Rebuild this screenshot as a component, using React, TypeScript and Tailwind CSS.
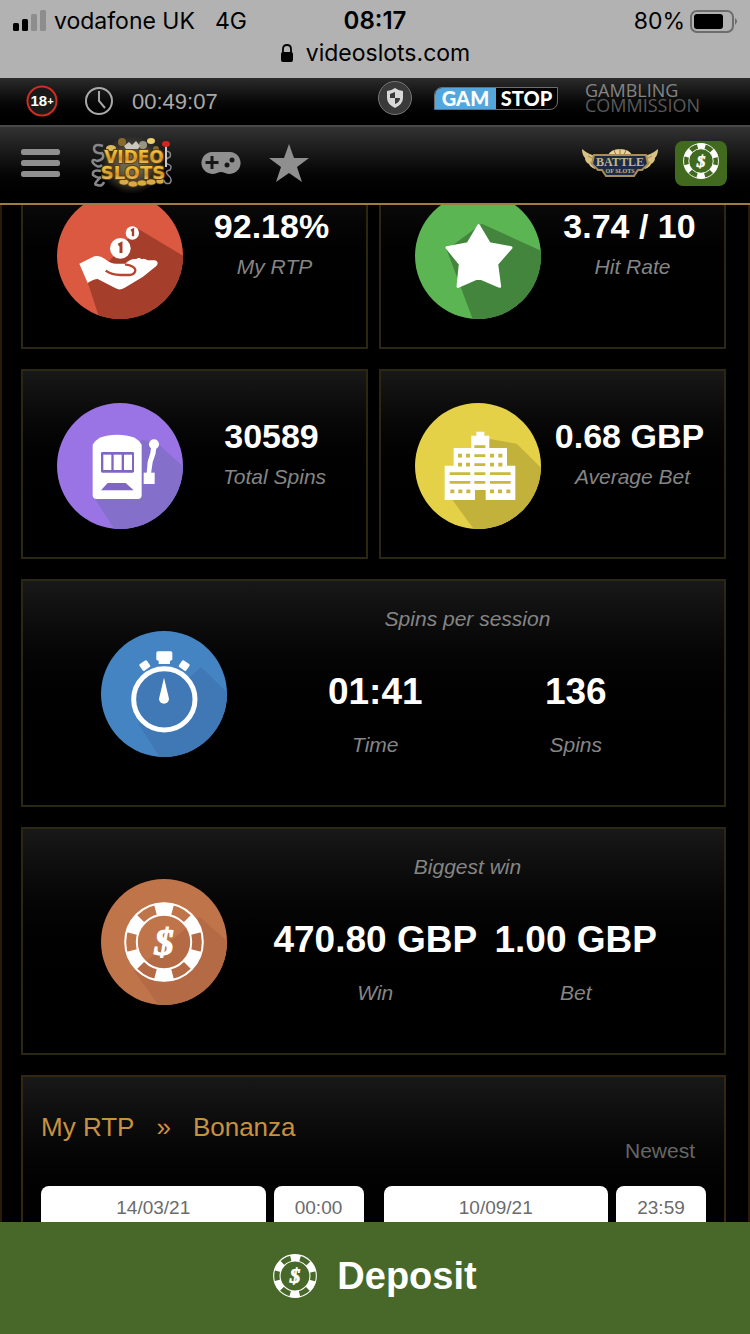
import React from 'react';

const Chip = ({ className }: { className?: string }) => (
    <svg viewBox="0 0 100 100" className={className} fill="none" stroke="currentColor" aria-hidden="true">
        <circle cx="50" cy="50" r="48.5" strokeWidth="2.5" />
        <circle cx="50" cy="50" r="34" strokeWidth="2.5" />
        <circle cx="50" cy="50" r="41.5" strokeWidth="15" pathLength={12} strokeDasharray="1 1" strokeDashoffset="-0.5" />
        <text x="50" y="66" textAnchor="middle" fill="currentColor" strokeWidth="1.5" className="font-['Liberation_Serif',serif] text-[48px] font-bold italic">$</text>
    </svg>
);

const RtpIcon = () => (
    <svg viewBox="0 0 378 378" className="size-[126px] shrink-0 rounded-full bg-[#db5940]" aria-hidden="true">
        <path d="M238 104 L378 188 V378 H128 L92 268 L180 180Z" fill="#a63e2c" />
        <g fill="#fff">
            <path d="M67 212 L112 190 Q128 186 143 197 Q160 212 178 212 H204 Q220 196 238 198 Q246 192 254 199 Q262 194 272 202 H294 Q308 208 298 219 L258 251 L202 285 Q188 293 176 286 L122 258 Q110 258 92 270Z" />
            <circle cx="190" cy="166" r="31" />
            <circle cx="226" cy="120" r="20" />
        </g>
        <path d="M146 233 Q164 246 190 246 H218 Q235 244 235 231 Q234 219 204 214" fill="none" stroke="#b8452f" strokeWidth="7" />
        <g fill="none" stroke="#a63e2c">
            <path d="M184 156 L192 152 V180" strokeWidth="9" />
            <path d="M222 113 L228 110 V130" strokeWidth="7" />
        </g>
    </svg>
);

const HitIcon = () => (
    <svg viewBox="0 0 378 378" className="size-[126px] shrink-0 rounded-full bg-[#5ab552]" aria-hidden="true">
        <path d="M200 92 L378 173 V378 H173 L95 170Z" fill="#43853c" />
        <path d="M191 98 L223 152 L288 164 L245 213 L254 280 L191 253 L129 280 L136 213 L96 164 L159 152Z" fill="#fff" stroke="#fff" strokeWidth="9" strokeLinejoin="round" />
    </svg>
);

const SpinsIcon = () => (
    <svg viewBox="0 0 378 378" className="size-[126px] shrink-0 rounded-full bg-[#9a74e4]" aria-hidden="true">
        <path d="M300 120 L378 190 V378 H172 L110 282 L254 110Z" fill="#8470cb" />
        <g fill="#fff">
            <path d="M107 125 Q122 95 180 95 Q240 95 254 125 V276 Q254 288 242 288 H119 Q107 288 107 276Z" />
            <circle cx="291" cy="124" r="15" />
            <path d="M283 128 L299 128 Q298 152 287 178 L282 212 H269 L272 176 Q282 150 283 128Z" />
            <rect x="260" y="209" width="33" height="34" />
        </g>
        <rect x="132" y="147" width="99" height="62" rx="4" fill="#8066c4" />
        <g fill="#fff">
            <rect x="139" y="155" width="24" height="46" />
            <rect x="170" y="155" width="24" height="46" />
            <rect x="201" y="155" width="24" height="46" />
        </g>
        <path d="M152 240 H206 L230 262 H132Z" fill="#8066c4" />
    </svg>
);

const BetIcon = () => (
    <svg viewBox="0 0 378 378" className="size-[126px] shrink-0 rounded-full bg-[#e4d148]" aria-hidden="true">
        <path d="M224 108 L305 122 L378 194 V378 H176 L110 288Z" fill="#c2b23c" />
        <path d="M184 86 H208 V98 H223 V135 H276 V188 H301 V291 H212 V261 H180 V291 H89 V188 H116 V135 H169 V98 H184Z" fill="#fff" />
        <g stroke="#c9b93f" strokeWidth="11" fill="none">
            <path d="M178 131 H211 M178 158 H211 M178 185 H211 M178 212 H211 M178 238 H211" strokeWidth="8" />
            <path d="M129 158 H141 M153 158 H165 M225 158 H237 M250 158 H262" />
            <path d="M129 185 H141 M153 185 H165 M225 185 H237 M250 185 H262" />
            <path d="M104 212 H166 M225 212 H287 M104 238 H166 M225 238 H287" strokeWidth="8" />
            <path d="M106 265 H118 M130 265 H142 M154 265 H166 M225 265 H237 M249 265 H261 M274 265 H286" />
        </g>
    </svg>
);

const TimeIcon = () => (
    <svg viewBox="0 0 378 378" className="size-[126px] shrink-0 rounded-full bg-[#4584c3]" aria-hidden="true">
        <path d="M300 108 L378 184 V378 H176 L112 278Z" fill="#3f78b4" />
        <circle cx="190" cy="205" r="92" fill="#4079b6" stroke="#fff" strokeWidth="15" />
        <g fill="#fff">
            <path d="M166 66 Q166 61 171 61 H209 Q214 61 214 66 V86 L207 90 V99 H173 V90 L166 86Z" />
            <rect x="118" y="92" width="27" height="24" rx="4" transform="rotate(-35 131 104)" />
            <rect x="236" y="92" width="27" height="24" rx="4" transform="rotate(35 250 104)" />
            <path d="M189 140 L204 203 A15 15 0 1 1 174 203Z" />
        </g>
    </svg>
);

const WinIcon = () => (
    <div className="relative size-[126px] shrink-0">
        <svg viewBox="0 0 378 378" className="size-[126px] rounded-full bg-[#c0744a]" aria-hidden="true">
            <path d="M296 114 L378 186 V378 H172 L100 276Z" fill="#b36a45" />
        </svg>
        <Chip className="absolute inset-0 m-auto size-20 text-white" />
    </div>
);

const SiteLogo = () => (
    <svg viewBox="0 0 84 60" className="h-[60px] w-[84px]" aria-label="Video Slots" role="img">
        <defs>
            <linearGradient id="gold" x1="0" y1="0" x2="0" y2="1">
                <stop offset="0.2" stopColor="#f2c53e" />
                <stop offset="0.6" stopColor="#cf9426" />
                <stop offset="1" stopColor="#fbeaa8" />
            </linearGradient>
            <radialGradient id="glow">
                <stop offset="0.3" stopColor="#6b6552" />
                <stop offset="1" stopColor="#6b6552" stopOpacity="0" />
            </radialGradient>
        </defs>
        <ellipse cx="42" cy="32" rx="32" ry="29" fill="url(#glow)" />
        <g fill="none" stroke="#85878a" strokeWidth="2.5">
            <path d="M13 13 Q4 10 4 16 Q5 21 12 20 Q16 26 7 28 Q1 25 3 30 Q8 36 12 32 M11 38 Q2 36 3 42 Q8 46 11 44 Q2 52 7 52 Q12 54 14 49" />
            <path d="M75 18 Q82 18 80 24 Q74 26 77 31 Q83 32 80 37 Q74 38 78 42 Q83 46 80 50 Q75 52 74 47" strokeWidth="1.5" />
        </g>
        <g fill="#8a6a2c">
            <circle cx="32" cy="9" r="4" />
            <circle cx="53" cy="12" r="4" fill="#9a9484" />
            <circle cx="66" cy="16" r="3" />
            <ellipse cx="21" cy="15" rx="5" ry="3" fill="#dcb95a" />
            <ellipse cx="61" cy="8" rx="4" ry="3" fill="#ecd070" />
        </g>
        <path d="M34 13 L39 9 L42 12 L46 8 L50 13 L48 16 H36Z" fill="#c9c7c0" />
        <path d="M76 13 V34" stroke="#c8c8c8" strokeWidth="2" />
        <ellipse cx="76" cy="11" rx="4" ry="3" fill="#d5241b" />
        <g fill="#d9ab45" stroke="#6b4710" strokeWidth="0.6">
            <ellipse cx="34" cy="49" rx="5" ry="3" />
            <ellipse cx="43" cy="51" rx="5" ry="3" />
            <ellipse cx="52" cy="50" rx="5" ry="3" />
            <ellipse cx="61" cy="49" rx="5" ry="3" />
            <ellipse cx="70" cy="48" rx="4" ry="3" />
        </g>
        <g fill="url(#gold)" stroke="#5e3d0c" strokeWidth="2" strokeLinejoin="round" paintOrder="stroke" className="font-['DejaVu_Sans',sans-serif] font-bold">
            <text x="44" y="30" textAnchor="middle" className="text-[17px]">VIDEO</text>
            <text x="43" y="46" textAnchor="middle" className="text-[18px]">SLOTS</text>
        </g>
    </svg>
);

const BattleLogo = () => (
    <svg viewBox="0 0 78 30" className="h-[30px] w-[78px]" aria-label="Battle of Slots" role="img">
        <path d="M27 7 Q30 1 39 1 Q48 1 51 7Z" fill="#e6d29a" />
        <path d="M33 2 L35 7 M39 1 V7 M45 2 L43 7" stroke="#8d7437" />
        <path d="M1 1 Q8 7 16 8 L14 21 Q9 19 8 16 Q4 14 4 10 Q1 7 1 1Z M77 1 Q70 7 62 8 L64 21 Q69 19 70 16 Q74 14 74 10 Q77 7 77 1Z" fill="#d9c184" />
        <path d="M7 8 L15 12 M9 14 L14 17 M71 8 L63 12 M69 14 L64 17" stroke="#8d7437" strokeWidth="0.7" />
        <path d="M13 7 H65 L67 16 L61 22 H57 L53 28 H25 L21 22 H17 L11 16Z" fill="#1c2b45" stroke="#a98d58" strokeWidth="2" />
        <g fill="#c4b588" textAnchor="middle" className="font-['Liberation_Serif',serif] font-bold">
            <text x="39" y="18" className="text-[12px]">BATTLE</text>
            <text x="39" y="25" className="text-[6px]">OF SLOTS</text>
        </g>
    </svg>
);

const Stat = ({ icon, value, label }: { icon: React.ReactNode; value: string; label: string }) => (
    <section className="flex h-[190px] items-start border-2 border-[#2c2710] bg-linear-to-b from-[#181818] to-black to-75% pt-8 pr-1.5 pl-[34px]">
        {icon}
        <div className="mt-3 flex-1 text-center whitespace-nowrap">
            <p className="text-[34px] leading-[42px] font-bold text-white">{value}</p>
            <p className="mt-2 pl-1.5 text-[21px] leading-6 text-[#858585] italic">{label}</p>
        </div>
    </section>
);

const WideStat = ({ icon, title, items }: { icon: React.ReactNode; title: string; items: string[][] }) => (
    <section className="col-span-2 flex h-[228px] items-start border-2 border-[#2c2710] bg-linear-to-b from-[#181818] to-black to-75% pr-4 pl-[78px]">
        <div className="pt-[50px]">{icon}</div>
        <div className="flex-1 pt-[26px] text-center text-[21px] leading-6 text-[#858585] italic">
            <h2>{title}</h2>
            <div className="mt-[38px] flex pr-8 pl-12">
                {items.map(([value, label]) => (
                    <div key={label} className="flex min-w-0 flex-1 flex-col items-center whitespace-nowrap">
                        <p className="text-[37px] leading-[46px] font-bold text-white not-italic">{value}</p>
                        <p className="mt-[18px]">{label}</p>
                    </div>
                ))}
            </div>
        </div>
    </section>
);

const inputClass = 'h-11 min-w-0 rounded-lg bg-white text-center text-[19px] text-[#6b6b6b]';

const DateRow = ({ name, date, time }: { name: string; date: string; time: string }) => (
    <div className="flex min-w-0 flex-1 gap-2">
        <input type="text" aria-label={`${name} date`} defaultValue={date} className={`${inputClass} flex-1`} />
        <input type="text" aria-label={`${name} time`} defaultValue={time} className={`${inputClass} w-[90px]`} />
    </div>
);

const App = () => {
    return (
        <div className="flex h-dvh flex-col overflow-hidden bg-black font-['Liberation_Sans',Arial,sans-serif]">
            <div className="h-[78px] shrink-0 bg-[#b2b2b2] px-3 pt-[5px] font-['Inter',sans-serif] text-[23px] leading-8 text-black">
                <div className="grid grid-cols-[1fr_auto_1fr] items-center">
                    <div className="flex items-center whitespace-nowrap">
                        <svg viewBox="0 0 34 22" className="mr-2 h-[22px] w-[34px]" aria-hidden="true">
                            <rect x="1" y="13" width="6" height="8" rx="1.5" />
                            <rect x="10" y="9" width="6" height="12" rx="1.5" />
                            <rect x="19" y="4" width="6" height="17" rx="1.5" fill="#8d8d8d" />
                            <rect x="28" y="0" width="6" height="21" rx="1.5" fill="#8d8d8d" />
                        </svg>
                        <span>vodafone UK</span>
                        <span className="ml-5">4G</span>
                    </div>
                    <span className="text-[24px] font-semibold">08:17</span>
                    <div className="flex items-center justify-end gap-1">
                        <span>80%</span>
                        <svg viewBox="0 0 49 24" className="h-6 w-[49px]" aria-hidden="true">
                            <rect x="2" y="2" width="42" height="21" rx="6" fill="none" stroke="#6d6d6d" strokeWidth="2" />
                            <rect x="5" y="5" width="29" height="15" rx="3" />
                            <path d="M46 9 Q50 12 46 16Z" fill="#6d6d6d" />
                        </svg>
                    </div>
                </div>
                <div className="flex items-center justify-center gap-3">
                    <svg viewBox="0 0 14 20" className="h-5 w-3.5" aria-hidden="true">
                        <path d="M3 10 V6 Q3 2 7 2 Q11 2 11 6 V10" fill="none" stroke="#000" strokeWidth="1.8" />
                        <rect x="1" y="9" width="12" height="10" rx="2" />
                    </svg>
                    <span>videoslots.com</span>
                </div>
            </div>

            <div className="flex h-[47px] shrink-0 items-center border-b border-black bg-linear-to-b from-[#2b2b2b] to-black pr-[45px] pl-[26px]">
                <svg viewBox="0 0 32 32" className="size-8" aria-label="18+" role="img">
                    <circle cx="16" cy="16" r="14.5" fill="#1a1a1a" stroke="#cf2d20" strokeWidth="2" />
                    <text x="16" y="21" textAnchor="middle" fill="#fff" className="text-[15px] font-bold">18<tspan className="text-[11px]" dy="-1">+</tspan></text>
                </svg>
                <svg viewBox="0 0 30 30" className="ml-[26px] size-[30px]" fill="none" stroke="#a9a9a9" strokeWidth="2" aria-hidden="true">
                    <circle cx="15" cy="15" r="13" />
                    <path d="M15 5 V15 L21 22" />
                </svg>
                <span className="ml-[18px] text-[22px] text-[#a9a9a9]">00:49:07</span>
                <div className="ml-auto flex items-center pb-1.5">
                    <a href="#" aria-label="Account protection">
                        <svg viewBox="0 0 36 36" className="size-9" aria-hidden="true">
                            <circle cx="18" cy="18" r="16.5" fill="#3a3a3a" stroke="#777" />
                            <path d="M18 8 Q22 11 26 11 V18 Q26 24 18 28 Q10 24 10 18 V11 Q14 11 18 8Z" fill="#d8d8d8" />
                            <path d="M18 12 V18 H13 V14Z M18 18 H23 Q23 22 18 24Z" fill="#3a3a3a" />
                        </svg>
                    </a>
                    <a href="#" className="ml-[21px] flex h-[23px] w-[124px] items-center overflow-hidden rounded-tl-lg rounded-br-lg border border-[#6d6d6d] bg-black text-center font-['Lato',sans-serif] text-[20px] leading-[21px] font-black text-white">
                        <span className="flex-1 bg-[#53a7dd]">GAM</span>
                        <span className="flex-1">STOP</span>
                    </a>
                    <a href="#" className="ml-[27px] w-[120px] font-['Open_Sans',sans-serif] text-[18px] leading-[15px] text-[#5a5a5a]">
                        <span className="block text-[#858585]">GAMBLING</span>
                        <span className="block">COMMISSION</span>
                    </a>
                </div>
            </div>

            <header className="flex h-20 shrink-0 items-center border-t-2 border-b-2 border-t-[#484848] border-b-[#a07c40] bg-linear-to-b from-[#333] to-black pr-[23px] pb-1 pl-5">
                <button type="button" aria-label="Menu">
                    <svg viewBox="0 0 42 30" className="h-[30px] w-[42px]" fill="#8f8f8f" aria-hidden="true">
                        <rect x="1" y="1" width="39" height="6" rx="2.5" />
                        <rect x="1" y="12" width="39" height="6" rx="2.5" />
                        <rect x="1" y="23" width="39" height="6" rx="2.5" />
                    </svg>
                </button>
                <a href="#" className="ml-7">
                    <SiteLogo />
                </a>
                <a href="#" aria-label="Games" className="ml-[27px]">
                    <svg viewBox="0 0 40 22" className="h-[22px] w-10" aria-hidden="true">
                        <path d="M11 0 H29 A11 11 0 1 1 24 21 Q20 19 16 21 A11 11 0 1 1 11 0Z" fill="#8f8f8f" />
                        <path d="M11 4 V17 M4.5 10.5 H17.5" stroke="#171717" strokeWidth="3" />
                        <circle cx="31" cy="8" r="2.5" fill="#171717" />
                        <circle cx="26" cy="13" r="2.5" fill="#171717" />
                    </svg>
                </a>
                <a href="#" aria-label="Favourites" className="ml-7">
                    <svg viewBox="0 0 40 38" className="h-[38px] w-10" fill="#8f8f8f" aria-hidden="true">
                        <path d="M20 0 L25 14 H40 L28 23 L33 38 L20 29 L7 38 L12 23 L0 14 H15Z" />
                    </svg>
                </a>
                <a href="#" className="ml-auto">
                    <BattleLogo />
                </a>
                <button type="button" aria-label="Cashier" className="ml-4 flex h-[45px] w-[52px] items-center justify-center rounded-lg bg-[#426a1f] pb-1 text-white">
                    <Chip className="size-9" />
                </button>
            </header>

            <main className="min-h-0 flex-1 overflow-hidden border-x-2 border-[#2a1c06] pr-[22px] pl-[19px]">
                <div className="-mt-[46px] grid grid-cols-2 gap-x-[11px] gap-y-5">
                    <Stat icon={<RtpIcon />} value="92.18%" label="My RTP" />
                    <Stat icon={<HitIcon />} value="3.74 / 10" label="Hit Rate" />
                    <Stat icon={<SpinsIcon />} value="30589" label="Total Spins" />
                    <Stat icon={<BetIcon />} value="0.68 GBP" label="Average Bet" />
                    <WideStat icon={<TimeIcon />} title="Spins per session" items={[['01:41', 'Time'], ['136', 'Spins']]} />
                    <WideStat icon={<WinIcon />} title="Biggest win" items={[['470.80 GBP', 'Win'], ['1.00 GBP', 'Bet']]} />

                    <section className="col-span-2 border-2 border-[#35270f] bg-linear-to-b from-[#181818] to-black px-[18px] pt-[34px] pb-5">
                        <div className="flex items-start justify-between">
                            <nav className="flex gap-[22px] text-[26px] leading-8 text-[#c8913f]">
                                <a href="#">My RTP</a>
                                <span>»</span>
                                <a href="#">Bonanza</a>
                            </nav>
                            <select aria-label="Sort order" className="mt-7 mr-2.5 h-6 appearance-none text-[21px] leading-6 text-[#666]">
                                <option>Newest</option>
                            </select>
                        </div>
                        <div className="mt-[23px] flex gap-5">
                            <DateRow name="From" date="14/03/21" time="00:00" />
                            <DateRow name="To" date="10/09/21" time="23:59" />
                        </div>
                    </section>
                </div>
            </main>

            <button type="button" className="flex h-28 shrink-0 items-center justify-center gap-5 bg-[#476829] pb-1 text-[38px] font-bold text-white">
                <Chip className="size-11" />
                Deposit
            </button>
        </div>
    );
};

export default App;
